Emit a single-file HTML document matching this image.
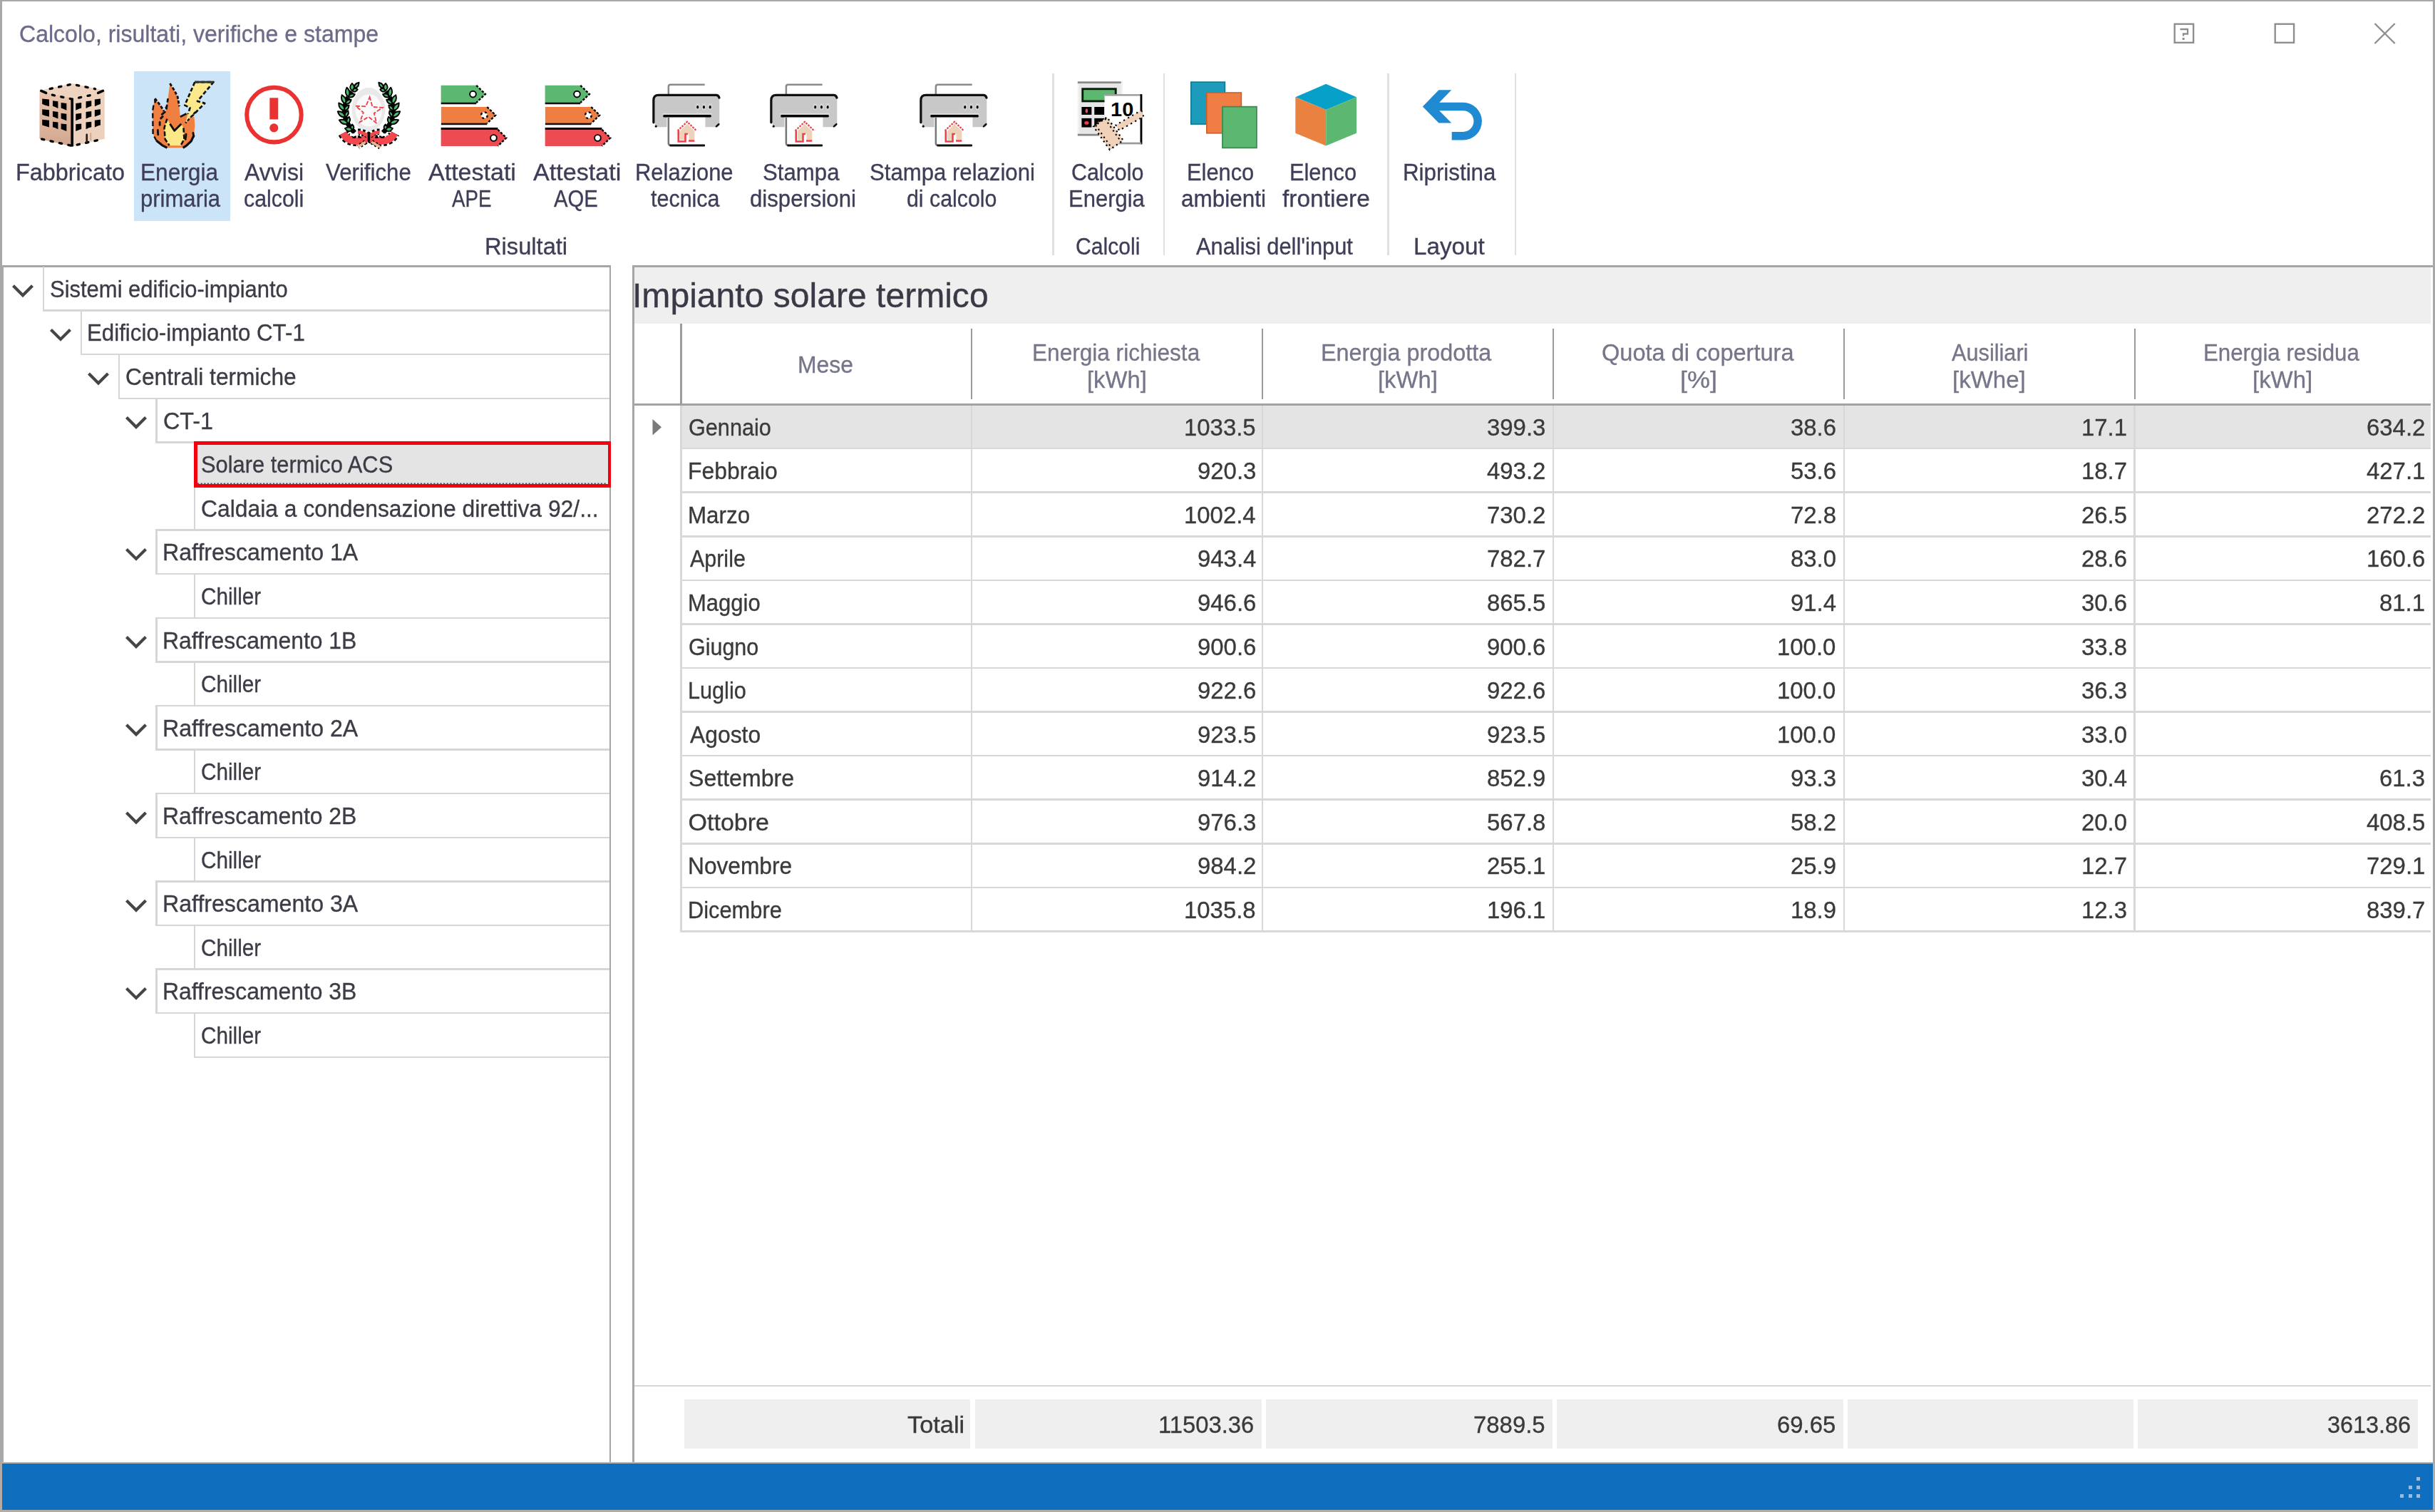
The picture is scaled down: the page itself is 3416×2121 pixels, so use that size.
<!DOCTYPE html><html><head><meta charset="utf-8"><title>Calcolo, risultati, verifiche e stampe</title><style>

html,body{margin:0;padding:0;background:#fff;}
body{width:3416px;height:2121px;position:relative;overflow:hidden;font-family:"Liberation Sans", sans-serif;}
#w{position:absolute;left:0;top:0;width:3416px;height:2121px;filter:blur(0.6px);}
i{position:absolute;display:block;}
.t{position:absolute;white-space:pre;-webkit-text-stroke:0.35px currentColor;font-size:34px;line-height:60px;transform-origin:0 50%;}
svg{position:absolute;overflow:visible;}

</style></head><body><div id="w">
<i style="left:188.0px;top:99.5px;width:134.7px;height:210.8px;background:#cce4f7"></i>
<i style="left:1476.4px;top:102.5px;width:2.6px;height:255.3px;background:#e0e0e0"></i>
<i style="left:1631.9px;top:102.5px;width:2.6px;height:255.3px;background:#e0e0e0"></i>
<i style="left:1946.2px;top:102.5px;width:2.6px;height:255.3px;background:#e0e0e0"></i>
<i style="left:2124.7px;top:102.5px;width:2.6px;height:255.3px;background:#e0e0e0"></i>
<i style="left:2.5px;top:371.6px;width:854.7px;height:3.2px;background:#a6a6a6"></i>
<i style="left:854.6px;top:371.6px;width:2.6px;height:1680.9px;background:#a6a6a6"></i>
<i style="left:-10.0px;top:371.6px;width:15.4px;height:1680.9px;background:#aaaaaa"></i>
<i style="left:886.8px;top:371.8px;width:2539.2px;height:3.2px;background:#a6a6a6"></i>
<i style="left:886.8px;top:371.8px;width:3.0px;height:1680.7px;background:#a6a6a6"></i>
<i style="left:59.5px;top:374.0px;width:2.6px;height:61.6px;background:#d6d6d6"></i>
<i style="left:59.5px;top:434.3px;width:795.1px;height:2.6px;background:#d6d6d6"></i>
<i style="left:112.5px;top:435.6px;width:2.6px;height:61.6px;background:#d6d6d6"></i>
<i style="left:112.5px;top:495.9px;width:742.1px;height:2.6px;background:#d6d6d6"></i>
<i style="left:165.5px;top:497.2px;width:2.6px;height:61.6px;background:#d6d6d6"></i>
<i style="left:165.5px;top:557.5px;width:689.1px;height:2.6px;background:#d6d6d6"></i>
<i style="left:218.3px;top:558.8px;width:2.6px;height:61.6px;background:#d6d6d6"></i>
<i style="left:218.3px;top:619.1px;width:636.3px;height:2.6px;background:#d6d6d6"></i>
<i style="left:271.5px;top:620.4px;width:2.6px;height:61.6px;background:#d6d6d6"></i>
<i style="left:271.5px;top:680.7px;width:583.1px;height:2.6px;background:#d6d6d6"></i>
<i style="left:271.5px;top:682.0px;width:2.6px;height:61.6px;background:#d6d6d6"></i>
<i style="left:218.3px;top:742.3px;width:636.3px;height:2.6px;background:#d6d6d6"></i>
<i style="left:218.3px;top:743.6px;width:2.6px;height:61.6px;background:#d6d6d6"></i>
<i style="left:218.3px;top:803.9px;width:636.3px;height:2.6px;background:#d6d6d6"></i>
<i style="left:271.5px;top:805.2px;width:2.6px;height:61.6px;background:#d6d6d6"></i>
<i style="left:218.3px;top:865.5px;width:636.3px;height:2.6px;background:#d6d6d6"></i>
<i style="left:218.3px;top:866.8px;width:2.6px;height:61.6px;background:#d6d6d6"></i>
<i style="left:218.3px;top:927.1px;width:636.3px;height:2.6px;background:#d6d6d6"></i>
<i style="left:271.5px;top:928.4px;width:2.6px;height:61.6px;background:#d6d6d6"></i>
<i style="left:218.3px;top:988.7px;width:636.3px;height:2.6px;background:#d6d6d6"></i>
<i style="left:218.3px;top:990.0px;width:2.6px;height:61.6px;background:#d6d6d6"></i>
<i style="left:218.3px;top:1050.3px;width:636.3px;height:2.6px;background:#d6d6d6"></i>
<i style="left:271.5px;top:1051.6px;width:2.6px;height:61.6px;background:#d6d6d6"></i>
<i style="left:218.3px;top:1111.9px;width:636.3px;height:2.6px;background:#d6d6d6"></i>
<i style="left:218.3px;top:1113.2px;width:2.6px;height:61.6px;background:#d6d6d6"></i>
<i style="left:218.3px;top:1173.5px;width:636.3px;height:2.6px;background:#d6d6d6"></i>
<i style="left:271.5px;top:1174.8px;width:2.6px;height:61.6px;background:#d6d6d6"></i>
<i style="left:218.3px;top:1235.1px;width:636.3px;height:2.6px;background:#d6d6d6"></i>
<i style="left:218.3px;top:1236.4px;width:2.6px;height:61.6px;background:#d6d6d6"></i>
<i style="left:218.3px;top:1296.7px;width:636.3px;height:2.6px;background:#d6d6d6"></i>
<i style="left:271.5px;top:1298.0px;width:2.6px;height:61.6px;background:#d6d6d6"></i>
<i style="left:218.3px;top:1358.3px;width:636.3px;height:2.6px;background:#d6d6d6"></i>
<i style="left:218.3px;top:1359.6px;width:2.6px;height:61.6px;background:#d6d6d6"></i>
<i style="left:218.3px;top:1419.9px;width:636.3px;height:2.6px;background:#d6d6d6"></i>
<i style="left:271.5px;top:1421.2px;width:2.6px;height:61.6px;background:#d6d6d6"></i>
<i style="left:271.5px;top:1481.5px;width:583.1px;height:2.6px;background:#d6d6d6"></i>
<i style="left:271.8px;top:619.4px;width:585.4px;height:64.4px;background:#f2000e"></i>
<i style="left:276.5px;top:624.1px;width:576.1px;height:55.0px;background:#e4e4e4"></i>
<i style="left:889.8px;top:375.0px;width:2520.7px;height:78.6px;background:#efefef"></i>
<i style="left:956.6px;top:569.2px;width:2453.9px;height:59.0px;background:#e4e4e4"></i>
<i style="left:954.3px;top:627.9px;width:2456.2px;height:2.6px;background:#d8d8d8"></i>
<i style="left:954.3px;top:689.4px;width:2456.2px;height:2.6px;background:#d8d8d8"></i>
<i style="left:954.3px;top:751.0px;width:2456.2px;height:2.6px;background:#d8d8d8"></i>
<i style="left:954.3px;top:812.6px;width:2456.2px;height:2.6px;background:#d8d8d8"></i>
<i style="left:954.3px;top:874.2px;width:2456.2px;height:2.6px;background:#d8d8d8"></i>
<i style="left:954.3px;top:935.7px;width:2456.2px;height:2.6px;background:#d8d8d8"></i>
<i style="left:954.3px;top:997.3px;width:2456.2px;height:2.6px;background:#d8d8d8"></i>
<i style="left:954.3px;top:1058.9px;width:2456.2px;height:2.6px;background:#d8d8d8"></i>
<i style="left:954.3px;top:1120.4px;width:2456.2px;height:2.6px;background:#d8d8d8"></i>
<i style="left:954.3px;top:1182.0px;width:2456.2px;height:2.6px;background:#d8d8d8"></i>
<i style="left:954.3px;top:1243.6px;width:2456.2px;height:2.6px;background:#d8d8d8"></i>
<i style="left:954.3px;top:1305.1px;width:2456.2px;height:2.6px;background:#d8d8d8"></i>
<i style="left:954.2px;top:567.6px;width:2.6px;height:740.1px;background:#d8d8d8"></i>
<i style="left:1361.9px;top:567.6px;width:2.6px;height:740.1px;background:#d8d8d8"></i>
<i style="left:1769.9px;top:567.6px;width:2.6px;height:740.1px;background:#d8d8d8"></i>
<i style="left:2177.8px;top:567.6px;width:2.6px;height:740.1px;background:#d8d8d8"></i>
<i style="left:2585.6px;top:567.6px;width:2.6px;height:740.1px;background:#d8d8d8"></i>
<i style="left:2993.4px;top:567.6px;width:2.6px;height:740.1px;background:#d8d8d8"></i>
<i style="left:889.8px;top:565.9px;width:2520.7px;height:3.3px;background:#a2a2a2"></i>
<i style="left:954.0px;top:453.6px;width:2.6px;height:113.4px;background:#9c9c9c"></i>
<i style="left:1362.0px;top:460.5px;width:2.4px;height:99.5px;background:#9a9a9a"></i>
<i style="left:1770.0px;top:460.5px;width:2.4px;height:99.5px;background:#9a9a9a"></i>
<i style="left:2177.9px;top:460.5px;width:2.4px;height:99.5px;background:#9a9a9a"></i>
<i style="left:2585.7px;top:460.5px;width:2.4px;height:99.5px;background:#9a9a9a"></i>
<i style="left:2993.5px;top:460.5px;width:2.4px;height:99.5px;background:#9a9a9a"></i>
<i style="left:889.8px;top:1942.5px;width:2520.7px;height:2.1px;background:#d6d6d6"></i>
<i style="left:960.4px;top:1962.8px;width:401.1px;height:69.6px;background:#efefef"></i>
<i style="left:1368.0px;top:1962.8px;width:401.5px;height:69.6px;background:#efefef"></i>
<i style="left:1776.0px;top:1962.8px;width:401.5px;height:69.6px;background:#efefef"></i>
<i style="left:2184.0px;top:1962.8px;width:401.5px;height:69.6px;background:#efefef"></i>
<i style="left:2592.0px;top:1962.8px;width:401.2px;height:69.6px;background:#efefef"></i>
<i style="left:2999.2px;top:1962.8px;width:392.8px;height:69.6px;background:#efefef"></i>
<i style="left:-10.0px;top:2050.8px;width:3436.0px;height:2.2px;background:#bcb4ac"></i>
<i style="left:3.0px;top:2052.8px;width:3410.0px;height:65.4px;background:#106ebe"></i>
<i style="left:3390.2px;top:2071.9px;width:5.0px;height:5.0px;background:#98bce2"></i>
<i style="left:3378.5px;top:2083.8px;width:5.0px;height:5.0px;background:#98bce2"></i>
<i style="left:3390.2px;top:2083.8px;width:5.0px;height:5.0px;background:#98bce2"></i>
<i style="left:3366.5px;top:2095.5px;width:5.0px;height:5.0px;background:#98bce2"></i>
<i style="left:3378.5px;top:2095.5px;width:5.0px;height:5.0px;background:#98bce2"></i>
<i style="left:3390.2px;top:2095.5px;width:5.0px;height:5.0px;background:#98bce2"></i>
<i style="left:-10.0px;top:-10.0px;width:3436.0px;height:12.4px;background:#a8a8a8"></i>
<i style="left:-10.0px;top:-10.0px;width:12.6px;height:2063.0px;background:#a8a8a8"></i>
<i style="left:3412.6px;top:-10.0px;width:13.4px;height:2063.0px;background:#a8a8a8"></i>
<i style="left:-10.0px;top:2053.0px;width:13.0px;height:78.0px;background:#b2aca6"></i>
<i style="left:3413.0px;top:2053.0px;width:13.0px;height:78.0px;background:#b2aca6"></i>
<i style="left:-10.0px;top:2118.2px;width:3436.0px;height:12.8px;background:#b2aca6"></i>
<svg style="left:0;top:0" width="3416" height="2121" viewBox="0 0 3416 2121"><path d="M18.5,400.8 L32.0,414.3 L45.5,400.8" fill="none" stroke="#454545" stroke-width="4.2"/><path d="M71.5,462.4 L85.0,475.9 L98.5,462.4" fill="none" stroke="#454545" stroke-width="4.2"/><path d="M124.5,524.0 L138.0,537.5 L151.5,524.0" fill="none" stroke="#454545" stroke-width="4.2"/><path d="M177.5,585.6 L191.0,599.1 L204.5,585.6" fill="none" stroke="#454545" stroke-width="4.2"/><path d="M177.5,770.4 L191.0,783.9 L204.5,770.4" fill="none" stroke="#454545" stroke-width="4.2"/><path d="M177.5,893.6 L191.0,907.1 L204.5,893.6" fill="none" stroke="#454545" stroke-width="4.2"/><path d="M177.5,1016.8 L191.0,1030.3 L204.5,1016.8" fill="none" stroke="#454545" stroke-width="4.2"/><path d="M177.5,1140.0 L191.0,1153.5 L204.5,1140.0" fill="none" stroke="#454545" stroke-width="4.2"/><path d="M177.5,1263.2 L191.0,1276.7 L204.5,1263.2" fill="none" stroke="#454545" stroke-width="4.2"/><path d="M177.5,1386.4 L191.0,1399.9 L204.5,1386.4" fill="none" stroke="#454545" stroke-width="4.2"/><path d="M915.5,588 L928,599.3 L915.5,610.5 Z" fill="#7a7a7a"/><rect x="3050.7" y="33.7" width="26.4" height="26.1" fill="none" stroke="#8e8e8e" stroke-width="2.4"/><path d="M3058.5,41 H3069 V47.5 H3063 V50.5" fill="none" stroke="#8e8e8e" stroke-width="2.3"/><rect x="3061.6" y="53" width="3" height="3" fill="#8e8e8e"/><rect x="3191.7" y="33.7" width="26.4" height="26.1" fill="none" stroke="#8e8e8e" stroke-width="2.4"/><path d="M3331.5,33 L3359.7,61 M3359.7,33 L3331.5,61" fill="none" stroke="#8e8e8e" stroke-width="2.4"/><path d="M277,678.4 H852" stroke="#555" stroke-width="1.6" stroke-dasharray="2.3 2.3"/></svg>
<svg style="left:40px;top:100px" width="140" height="120" viewBox="0 0 1764 1512"><defs><linearGradient id="bl" x1="0" y1="0" x2="0" y2="1"><stop offset="0" stop-color="#ecc8b0"/><stop offset="1" stop-color="#d2a68e"/></linearGradient></defs><polygon points="195,340 770,470 770,1330 195,1195" fill="url(#bl)"/><polygon points="770,470 1345,340 1345,1195 770,1330" fill="#ecd2be"/><polygon points="195,340 770,215 1345,340 770,470" fill="#eed4c0"/><g fill="none" stroke="#000" stroke-width="42" stroke-linecap="round" stroke-dasharray="42 118"><path d="M370,312 L770,228 L1180,312" stroke-dashoffset="-10"/><path d="M420,418 L770,492 L1120,418" stroke-dasharray="40 120"/><path d="M215,1195 L770,1318 L1325,1195" stroke-dashoffset="-20"/></g><path d="M225,345 L310,382 M1315,345 L1230,382" stroke="#000" stroke-width="46" stroke-linecap="round"/><rect x="748" y="480" width="46" height="850" fill="#000"/><g fill="#000"><polygon points="242,485 365,497 365,619 282,595 242,580" /><polygon points="428,520 522,532 522,654 468,630 428,615" /><polygon points="575,555 672,567 672,689 615,665 575,650" /><polygon points="835,567 935,555 935,650 890,665 835,689" /><polygon points="1015,532 1112,520 1112,615 1067,630 1015,654" /><polygon points="1170,497 1272,485 1272,580 1227,595 1170,619" /><polygon points="242,670 365,682 365,804 282,780 242,765" /><polygon points="428,705 522,717 522,839 468,815 428,800" /><polygon points="575,740 672,752 672,874 615,850 575,835" /><polygon points="835,752 935,740 935,835 890,850 835,874" /><polygon points="1015,717 1112,705 1112,800 1067,815 1015,839" /><polygon points="1170,682 1272,670 1272,765 1227,780 1170,804" /><polygon points="242,855 365,867 365,989 282,965 242,950" /><polygon points="428,890 522,902 522,1024 468,1000 428,985" /><polygon points="575,925 672,937 672,1059 615,1035 575,1020" /><polygon points="835,937 935,925 935,1020 890,1035 835,1059" /><polygon points="1015,902 1112,890 1112,985 1067,1000 1015,1024" /><polygon points="1170,867 1272,855 1272,950 1227,965 1170,989" /></g><path d="M1030,1120 V1250" stroke="#2a1a10" stroke-width="34" stroke-linecap="round"/><path d="M1100,1090 V1220" stroke="#c8a088" stroke-width="22"/></svg>
<svg style="left:190px;top:100px" width="140" height="120" viewBox="0 0 1764 1512"><polygon points="1050,190 1380,190 1095,530 1225,565 880,915 965,645 872,600" fill="#fce98c" stroke="#111" stroke-width="34" stroke-dasharray="70 38" stroke-linejoin="round"/><path d="M1050,190 H1380" stroke="#333" stroke-width="36"/><path d="M345,480 L430,590 L505,705 L540,690 L575,480 L610,215 L690,340 L745,450 L775,620 L792,805 L900,750 L1040,810 L1050,960 L1035,1130 L985,1235 L900,1315 L840,1352 L560,1352 L470,1305 L370,1225 L310,1110 L305,700 L320,590 Z" fill="#f07f42"/><path d="M345,480 L430,590 L505,705 M610,215 L690,340 L745,450 L775,620" fill="none" stroke="#111" stroke-width="36" stroke-dasharray="55 30" stroke-linejoin="round"/><path d="M320,600 L305,700 L310,1110 L370,1225" fill="none" stroke="#111" stroke-width="30" stroke-dasharray="90 50"/><path d="M370,1225 L470,1305 L560,1352 M840,1352 L900,1315 L985,1235 L1035,1130" fill="none" stroke="#111" stroke-width="40" stroke-linejoin="round"/><path d="M575,480 L545,680 M345,490 L350,560" fill="none" stroke="#111" stroke-width="34" stroke-dasharray="70 40"/><path d="M792,805 L900,750" fill="none" stroke="#111" stroke-width="34"/><polygon points="925,760 1060,700 885,915" fill="#fce98c"/><path d="M1060,720 L885,915" stroke="#111" stroke-width="30" stroke-dasharray="50 30"/><path d="M560,840 L610,930 L690,1050 L810,930 L850,1000 L862,1200 L800,1312 L600,1312 L525,1200 L510,1000 Z" fill="#fde888"/><path d="M610,930 L690,1050 L810,930" fill="none" stroke="#111" stroke-width="36" stroke-linejoin="round"/><path d="M560,840 L510,1000 L525,1200 L600,1312 M850,1000 L862,1200 L800,1312" fill="none" stroke="#111" stroke-width="32" stroke-dasharray="80 36"/><path d="M470,760 L520,720 M450,830 L480,800 M430,900 L430,950 M395,1040 L400,1120 M895,1110 L885,1200 M1020,1090 L1030,1150 M540,640 L548,660" stroke="#111" stroke-width="36" stroke-linecap="round"/></svg>
<svg style="left:320px;top:100px" width="140" height="120" viewBox="0 0 1764 1512"><circle cx="812" cy="770" r="482" fill="none" stroke="#ea3232" stroke-width="76"/><rect x="735" y="470" width="150" height="380" fill="#ea3232"/><circle cx="810" cy="1000" r="76" fill="#ea3232"/></svg>
<svg style="left:450px;top:100px" width="140" height="120" viewBox="0 0 1764 1512"><ellipse cx="845" cy="675" rx="295" ry="385" fill="#e9e9e9"/><ellipse cx="848" cy="690" rx="235" ry="285" fill="#fafafa"/><polygon points="865,455 914,628 1092,642 943,742 985,916 844,805 691,898 753,730 617,614 796,621" fill="none" stroke="#ee4450" stroke-width="24" stroke-dasharray="55 48" stroke-linecap="round"/><g><path d="M600,1085 Q210,690 650,235" fill="none" stroke="#000" stroke-width="84" stroke-dasharray="90 30"/><path transform="translate(556 1037) rotate(-90)" d="M0,0 Q44,-58 97.5,0 Q44,58 0,0 Z" fill="#4fba6c" stroke="#000" stroke-width="24" stroke-linejoin="round"/><path transform="translate(556 1037) rotate(-168)" d="M0,0 Q58,-72 130,0 Q58,72 0,0 Z" fill="#4fba6c" stroke="#000" stroke-width="24" stroke-linejoin="round"/><path transform="translate(477 925) rotate(-79)" d="M0,0 Q56,-58 123.75,0 Q56,58 0,0 Z" fill="#4fba6c" stroke="#000" stroke-width="24" stroke-linejoin="round"/><path transform="translate(477 925) rotate(-157)" d="M0,0 Q74,-72 165,0 Q74,72 0,0 Z" fill="#4fba6c" stroke="#000" stroke-width="24" stroke-linejoin="round"/><path transform="translate(431 809) rotate(-65)" d="M0,0 Q56,-58 123.75,0 Q56,58 0,0 Z" fill="#4fba6c" stroke="#000" stroke-width="24" stroke-linejoin="round"/><path transform="translate(431 809) rotate(-143)" d="M0,0 Q74,-72 165,0 Q74,72 0,0 Z" fill="#4fba6c" stroke="#000" stroke-width="24" stroke-linejoin="round"/><path transform="translate(417 692) rotate(-49)" d="M0,0 Q56,-58 123.75,0 Q56,58 0,0 Z" fill="#4fba6c" stroke="#000" stroke-width="24" stroke-linejoin="round"/><path transform="translate(417 692) rotate(-127)" d="M0,0 Q74,-72 165,0 Q74,72 0,0 Z" fill="#4fba6c" stroke="#000" stroke-width="24" stroke-linejoin="round"/><path transform="translate(435 572) rotate(-34)" d="M0,0 Q56,-58 123.75,0 Q56,58 0,0 Z" fill="#4fba6c" stroke="#000" stroke-width="24" stroke-linejoin="round"/><path transform="translate(435 572) rotate(-112)" d="M0,0 Q74,-72 165,0 Q74,72 0,0 Z" fill="#4fba6c" stroke="#000" stroke-width="24" stroke-linejoin="round"/><path transform="translate(487 450) rotate(-21)" d="M0,0 Q56,-58 123.75,0 Q56,58 0,0 Z" fill="#4fba6c" stroke="#000" stroke-width="24" stroke-linejoin="round"/><path transform="translate(487 450) rotate(-99)" d="M0,0 Q74,-72 165,0 Q74,72 0,0 Z" fill="#4fba6c" stroke="#000" stroke-width="24" stroke-linejoin="round"/><path transform="translate(556 343) rotate(-13)" d="M0,0 Q44,-58 97.5,0 Q44,58 0,0 Z" fill="#4fba6c" stroke="#000" stroke-width="24" stroke-linejoin="round"/><path transform="translate(556 343) rotate(-91)" d="M0,0 Q58,-72 130,0 Q58,72 0,0 Z" fill="#4fba6c" stroke="#000" stroke-width="24" stroke-linejoin="round"/><path transform="translate(592 298) rotate(-50)" d="M0,0 Q58,-56 130,0 Q58,56 0,0 Z" fill="#4fba6c" stroke="#000" stroke-width="24" stroke-linejoin="round"/></g><g transform="translate(1700 0) scale(-1 1)"><path d="M600,1085 Q210,690 650,235" fill="none" stroke="#000" stroke-width="84" stroke-dasharray="90 30"/><path transform="translate(556 1037) rotate(-90)" d="M0,0 Q44,-58 97.5,0 Q44,58 0,0 Z" fill="#4fba6c" stroke="#000" stroke-width="24" stroke-linejoin="round"/><path transform="translate(556 1037) rotate(-168)" d="M0,0 Q58,-72 130,0 Q58,72 0,0 Z" fill="#4fba6c" stroke="#000" stroke-width="24" stroke-linejoin="round"/><path transform="translate(477 925) rotate(-79)" d="M0,0 Q56,-58 123.75,0 Q56,58 0,0 Z" fill="#4fba6c" stroke="#000" stroke-width="24" stroke-linejoin="round"/><path transform="translate(477 925) rotate(-157)" d="M0,0 Q74,-72 165,0 Q74,72 0,0 Z" fill="#4fba6c" stroke="#000" stroke-width="24" stroke-linejoin="round"/><path transform="translate(431 809) rotate(-65)" d="M0,0 Q56,-58 123.75,0 Q56,58 0,0 Z" fill="#4fba6c" stroke="#000" stroke-width="24" stroke-linejoin="round"/><path transform="translate(431 809) rotate(-143)" d="M0,0 Q74,-72 165,0 Q74,72 0,0 Z" fill="#4fba6c" stroke="#000" stroke-width="24" stroke-linejoin="round"/><path transform="translate(417 692) rotate(-49)" d="M0,0 Q56,-58 123.75,0 Q56,58 0,0 Z" fill="#4fba6c" stroke="#000" stroke-width="24" stroke-linejoin="round"/><path transform="translate(417 692) rotate(-127)" d="M0,0 Q74,-72 165,0 Q74,72 0,0 Z" fill="#4fba6c" stroke="#000" stroke-width="24" stroke-linejoin="round"/><path transform="translate(435 572) rotate(-34)" d="M0,0 Q56,-58 123.75,0 Q56,58 0,0 Z" fill="#4fba6c" stroke="#000" stroke-width="24" stroke-linejoin="round"/><path transform="translate(435 572) rotate(-112)" d="M0,0 Q74,-72 165,0 Q74,72 0,0 Z" fill="#4fba6c" stroke="#000" stroke-width="24" stroke-linejoin="round"/><path transform="translate(487 450) rotate(-21)" d="M0,0 Q56,-58 123.75,0 Q56,58 0,0 Z" fill="#4fba6c" stroke="#000" stroke-width="24" stroke-linejoin="round"/><path transform="translate(487 450) rotate(-99)" d="M0,0 Q74,-72 165,0 Q74,72 0,0 Z" fill="#4fba6c" stroke="#000" stroke-width="24" stroke-linejoin="round"/><path transform="translate(556 343) rotate(-13)" d="M0,0 Q44,-58 97.5,0 Q44,58 0,0 Z" fill="#4fba6c" stroke="#000" stroke-width="24" stroke-linejoin="round"/><path transform="translate(556 343) rotate(-91)" d="M0,0 Q58,-72 130,0 Q58,72 0,0 Z" fill="#4fba6c" stroke="#000" stroke-width="24" stroke-linejoin="round"/><path transform="translate(592 298) rotate(-50)" d="M0,0 Q58,-56 130,0 Q58,56 0,0 Z" fill="#4fba6c" stroke="#000" stroke-width="24" stroke-linejoin="round"/></g><path d="M395,1095 Q470,1240 650,1232 Q790,1215 850,1150 Q910,1215 1050,1232 Q1230,1240 1305,1095" fill="none" stroke="#000" stroke-width="185" stroke-dasharray="46 34"/><path d="M395,1095 Q470,1240 650,1232 Q790,1215 850,1150 Q910,1215 1050,1232 Q1230,1240 1305,1095" fill="none" stroke="#f4484e" stroke-width="125"/><path d="M660,1070 Q760,1060 850,1150 Q940,1060 1040,1070" fill="none" stroke="#000" stroke-width="110" stroke-dasharray="40 36"/><path d="M660,1080 Q760,1070 850,1160 Q940,1070 1040,1080" fill="none" stroke="#f4484e" stroke-width="62"/><ellipse cx="565" cy="1122" rx="55" ry="24" fill="#fff"/><ellipse cx="1135" cy="1122" rx="55" ry="24" fill="#fff"/><path d="M850,1110 V1235" stroke="#000" stroke-width="44"/><path d="M560,1168 H740 M960,1168 H1140" stroke="#000" stroke-width="32" stroke-dasharray="56 44"/><path d="M790,1250 L660,1335 M900,1250 L1050,1340" stroke="#000" stroke-width="84" stroke-dasharray="34 40"/><path d="M790,1250 L660,1335 M900,1250 L1050,1340" stroke="#e8b896" stroke-width="44"/></svg>
<svg style="left:600px;top:100px" width="140" height="120" viewBox="0 0 1764 1512"><polygon points="235,250 860,250 1020,402.5 860,555 235,555" fill="#5cb871"/><path d="M860,250 L1020,402.5 L860,555" fill="none" stroke="#000" stroke-width="30" stroke-dasharray="42 26"/><rect x="235" y="551" width="625" height="32" fill="#111"/><circle cx="800" cy="404.5" r="55" fill="#fff" stroke="#000" stroke-width="24" /><polygon points="238,630 1050,630 1200,775.0 1050,920 238,920" fill="#ef7e42"/><path d="M1050,630 L1200,775.0 L1050,920" fill="none" stroke="#000" stroke-width="30" stroke-dasharray="42 26"/><rect x="238" y="916" width="812" height="32" fill="#111"/><circle cx="1000" cy="777.0" r="55" fill="#fff" stroke="#000" stroke-width="30" stroke-dasharray='40 46'/><polygon points="235,1030 1240,1030 1390,1176.0 1240,1322 235,1322" fill="#eb4b51"/><path d="M1240,1030 L1390,1176.0 L1240,1322" fill="none" stroke="#000" stroke-width="30" stroke-dasharray="42 26"/><rect x="235" y="995" width="1005" height="38" fill="#000"/><circle cx="1165" cy="1178.0" r="55" fill="#fff" stroke="#000" stroke-width="24" /></svg>
<svg style="left:746.3px;top:100px" width="140" height="120" viewBox="0 0 1764 1512"><polygon points="235,250 860,250 1020,402.5 860,555 235,555" fill="#5cb871"/><path d="M860,250 L1020,402.5 L860,555" fill="none" stroke="#000" stroke-width="30" stroke-dasharray="42 26"/><rect x="235" y="551" width="625" height="32" fill="#111"/><circle cx="800" cy="404.5" r="55" fill="#fff" stroke="#000" stroke-width="24" /><polygon points="238,630 1050,630 1200,775.0 1050,920 238,920" fill="#ef7e42"/><path d="M1050,630 L1200,775.0 L1050,920" fill="none" stroke="#000" stroke-width="30" stroke-dasharray="42 26"/><rect x="238" y="916" width="812" height="32" fill="#111"/><circle cx="1000" cy="777.0" r="55" fill="#fff" stroke="#000" stroke-width="30" stroke-dasharray='40 46'/><polygon points="235,1030 1240,1030 1390,1176.0 1240,1322 235,1322" fill="#eb4b51"/><path d="M1240,1030 L1390,1176.0 L1240,1322" fill="none" stroke="#000" stroke-width="30" stroke-dasharray="42 26"/><rect x="235" y="995" width="1005" height="38" fill="#000"/><circle cx="1165" cy="1178.0" r="55" fill="#fff" stroke="#000" stroke-width="24" /></svg>
<svg style="left:895px;top:100px" width="140" height="120" viewBox="0 0 1764 1512"><path d="M540,410 V270 Q540,235 575,235 H1180" fill="none" stroke="#8a8a8a" stroke-width="32"/><path d="M300,500 Q300,440 360,440 H1380 Q1440,440 1440,500 V930 Q1440,985 1385,985 H1190 V800 H510 V985 H355 Q300,985 300,930 Z" fill="#c8c8c8"/><path d="M276,905 V510 Q276,420 366,420 H1385 Q1425,425 1436,468" fill="none" stroke="#111" stroke-width="42" stroke-linecap="round"/><circle cx="318" cy="972" r="20" fill="#111"/><path d="M1385,975 L1428,935" stroke="#111" stroke-width="32" stroke-linecap="round"/><rect x="445" y="770" width="850" height="42" rx="16" fill="#000"/><rect x="430" y="742" width="880" height="22" fill="#dcdcdc"/><ellipse cx="1055" cy="628" rx="40" ry="62" fill="#d4d4d4"/><ellipse cx="1055" cy="632" rx="19" ry="28" fill="#000"/><ellipse cx="1165" cy="628" rx="40" ry="62" fill="#d4d4d4"/><ellipse cx="1165" cy="632" rx="19" ry="28" fill="#000"/><ellipse cx="1275" cy="628" rx="40" ry="62" fill="#d4d4d4"/><ellipse cx="1275" cy="632" rx="19" ry="28" fill="#000"/><path d="M540,812 V1270 Q540,1310 580,1310" fill="none" stroke="#777" stroke-width="32"/><rect x="560" y="1290" width="625" height="40" rx="14" fill="#111"/><polygon points="740,1060 870,930 1000,1060 1000,1210 900,1210 900,1110 840,1110 840,1215 740,1215" fill="#ecd2ba"/><path d="M700,1052 L870,892 L1035,1052" fill="none" stroke="#ee4048" stroke-width="28" stroke-dasharray="34 18"/><path d="M715,1050 V1240 H838 V1110 H880" fill="none" stroke="#ee4048" stroke-width="32"/><rect x="895" y="1213" width="105" height="32" fill="#ee4048"/></svg>
<svg style="left:1059.6px;top:100px" width="140" height="120" viewBox="0 0 1764 1512"><path d="M540,410 V270 Q540,235 575,235 H1180" fill="none" stroke="#8a8a8a" stroke-width="32"/><path d="M300,500 Q300,440 360,440 H1380 Q1440,440 1440,500 V930 Q1440,985 1385,985 H1190 V800 H510 V985 H355 Q300,985 300,930 Z" fill="#c8c8c8"/><path d="M276,905 V510 Q276,420 366,420 H1385 Q1425,425 1436,468" fill="none" stroke="#111" stroke-width="42" stroke-linecap="round"/><circle cx="318" cy="972" r="20" fill="#111"/><path d="M1385,975 L1428,935" stroke="#111" stroke-width="32" stroke-linecap="round"/><rect x="445" y="770" width="850" height="42" rx="16" fill="#000"/><rect x="430" y="742" width="880" height="22" fill="#dcdcdc"/><ellipse cx="1055" cy="628" rx="40" ry="62" fill="#d4d4d4"/><ellipse cx="1055" cy="632" rx="19" ry="28" fill="#000"/><ellipse cx="1165" cy="628" rx="40" ry="62" fill="#d4d4d4"/><ellipse cx="1165" cy="632" rx="19" ry="28" fill="#000"/><ellipse cx="1275" cy="628" rx="40" ry="62" fill="#d4d4d4"/><ellipse cx="1275" cy="632" rx="19" ry="28" fill="#000"/><path d="M540,812 V1270 Q540,1310 580,1310" fill="none" stroke="#777" stroke-width="32"/><rect x="560" y="1290" width="625" height="40" rx="14" fill="#111"/><polygon points="740,1060 870,930 1000,1060 1000,1210 900,1210 900,1110 840,1110 840,1215 740,1215" fill="#ecd2ba"/><path d="M700,1052 L870,892 L1035,1052" fill="none" stroke="#ee4048" stroke-width="28" stroke-dasharray="34 18"/><path d="M715,1050 V1240 H838 V1110 H880" fill="none" stroke="#ee4048" stroke-width="32"/><rect x="895" y="1213" width="105" height="32" fill="#ee4048"/></svg>
<svg style="left:1270.4px;top:100px" width="140" height="120" viewBox="0 0 1764 1512"><path d="M540,410 V270 Q540,235 575,235 H1180" fill="none" stroke="#8a8a8a" stroke-width="32"/><path d="M300,500 Q300,440 360,440 H1380 Q1440,440 1440,500 V930 Q1440,985 1385,985 H1190 V800 H510 V985 H355 Q300,985 300,930 Z" fill="#c8c8c8"/><path d="M276,905 V510 Q276,420 366,420 H1385 Q1425,425 1436,468" fill="none" stroke="#111" stroke-width="42" stroke-linecap="round"/><circle cx="318" cy="972" r="20" fill="#111"/><path d="M1385,975 L1428,935" stroke="#111" stroke-width="32" stroke-linecap="round"/><rect x="445" y="770" width="850" height="42" rx="16" fill="#000"/><rect x="430" y="742" width="880" height="22" fill="#dcdcdc"/><ellipse cx="1055" cy="628" rx="40" ry="62" fill="#d4d4d4"/><ellipse cx="1055" cy="632" rx="19" ry="28" fill="#000"/><ellipse cx="1165" cy="628" rx="40" ry="62" fill="#d4d4d4"/><ellipse cx="1165" cy="632" rx="19" ry="28" fill="#000"/><ellipse cx="1275" cy="628" rx="40" ry="62" fill="#d4d4d4"/><ellipse cx="1275" cy="632" rx="19" ry="28" fill="#000"/><path d="M540,812 V1270 Q540,1310 580,1310" fill="none" stroke="#777" stroke-width="32"/><rect x="560" y="1290" width="625" height="40" rx="14" fill="#111"/><polygon points="740,1060 870,930 1000,1060 1000,1210 900,1210 900,1110 840,1110 840,1215 740,1215" fill="#ecd2ba"/><path d="M700,1052 L870,892 L1035,1052" fill="none" stroke="#ee4048" stroke-width="28" stroke-dasharray="34 18"/><path d="M715,1050 V1240 H838 V1110 H880" fill="none" stroke="#ee4048" stroke-width="32"/><rect x="895" y="1213" width="105" height="32" fill="#ee4048"/></svg>
<svg style="left:1490px;top:100px" width="140" height="120" viewBox="0 0 1764 1512"><rect x="275" y="180" width="795" height="960" fill="#e6e6e6"/><rect x="290" y="215" width="765" height="890" fill="none" stroke="#f2f2f2" stroke-width="30"/><rect x="275" y="180" width="765" height="36" fill="#8a8a8a"/><rect x="275" y="1105" width="380" height="36" fill="#8a8a8a"/><rect x="362" y="312" width="586" height="216" fill="#5cb871" stroke="#0a1a0a" stroke-width="36"/><rect x="345" y="630" width="176" height="138" fill="#000"/><rect x="570" y="630" width="176" height="138" fill="#000"/><rect x="345" y="830" width="176" height="160" fill="#000"/><rect x="570" y="830" width="176" height="160" fill="#000"/><ellipse cx="433" cy="700" rx="22" ry="38" fill="#f05058"/><ellipse cx="433" cy="912" rx="40" ry="30" fill="#e8404a"/><ellipse cx="650" cy="925" rx="28" ry="36" fill="#f05058"/><rect x="750" y="410" width="665" height="880" fill="#fff"/><rect x="750" y="405" width="640" height="30" fill="#9a9a9a"/><rect x="1380" y="405" width="36" height="885" fill="#000"/><rect x="960" y="1256" width="440" height="34" fill="#9a9a9a"/><text x="858" y="800" font-family="Liberation Sans, sans-serif" font-weight="bold" font-size="350" fill="#000" textLength="405" lengthAdjust="spacingAndGlyphs">10</text><polygon points="1400,690 1440,800 1010,1045 950,950" fill="#f0d2ba" stroke="#000" stroke-width="26" stroke-dasharray="28 60"/><g transform="rotate(-35 815 1095)"><rect x="670" y="850" width="290" height="500" fill="#f0d2ba" stroke="#000" stroke-width="28" stroke-dasharray="28 55"/><path d="M715,850 V1350 M915,850 V1350" stroke="#000" stroke-width="26" stroke-dasharray="28 55"/></g></svg>
<svg style="left:0;top:0" width="3416" height="400" viewBox="0 0 3416 400"><rect x="1670.8" y="115.1" width="47.6" height="59" fill="#1c9cba" stroke="#0f7890" stroke-width="1.6"/><rect x="1692.8" y="130" width="48.6" height="56.8" fill="#f07d43" stroke="#c8602c" stroke-width="1.6"/><rect x="1715" y="149.7" width="47.9" height="57.7" fill="#5cb871" stroke="#3a8c52" stroke-width="1.8"/></svg>
<svg style="left:0;top:0" width="3416" height="400" viewBox="0 0 3416 400"><polygon points="1860.2,117.8 1903,136.2 1860.2,154 1817.3,136.2" fill="#06a0c8"/><polygon points="1817.3,136.2 1860.2,154 1860.2,204.6 1817.3,186.8" fill="#e98140"/><polygon points="1903,136.2 1860.2,154 1860.2,204.6 1903,186.8" fill="#5cb871"/></svg>
<svg style="left:1970px;top:100px" width="140" height="120" viewBox="0 0 1764 1512"><path d="M325,625 L610,330 L835,330 L620,550 L1040,550 A332.5,332.5 0 0 1 1040,1215 L840,1215 L840,1070 L1040,1070 A187.5,187.5 0 0 0 1040,695 L620,695 L835,915 L610,915 Z" fill="#1f8ad2"/></svg>
<span class="t" style="left:26.6px;top:16.5px;color:#6c6c8a;transform:scaleX(0.9426)">Calcolo, risultati, verifiche e stampe</span>
<span class="t" style="left:22.1px;top:210.8px;color:#3e3e58;transform:scaleX(0.9519)">Fabbricato</span>
<span class="t" style="left:197.0px;top:210.8px;color:#3e3e58;transform:scaleX(0.9307)">Energia</span>
<span class="t" style="left:196.7px;top:248.3px;color:#3e3e58;transform:scaleX(0.9132)">primaria</span>
<span class="t" style="left:342.7px;top:210.8px;color:#3e3e58;transform:scaleX(0.9430)">Avvisi</span>
<span class="t" style="left:341.8px;top:248.3px;color:#3e3e58;transform:scaleX(0.8912)">calcoli</span>
<span class="t" style="left:456.6px;top:210.8px;color:#3e3e58;transform:scaleX(0.9194)">Verifiche</span>
<span class="t" style="left:601.4px;top:210.8px;color:#3e3e58;transform:scaleX(1.0008)">Attestati</span>
<span class="t" style="left:633.6px;top:248.3px;color:#3e3e58;transform:scaleX(0.8149)">APE</span>
<span class="t" style="left:747.8px;top:210.8px;color:#3e3e58;transform:scaleX(1.0033)">Attestati</span>
<span class="t" style="left:777.0px;top:248.3px;color:#3e3e58;transform:scaleX(0.8614)">AQE</span>
<span class="t" style="left:891.3px;top:210.8px;color:#3e3e58;transform:scaleX(0.9095)">Relazione</span>
<span class="t" style="left:913.2px;top:248.3px;color:#3e3e58;transform:scaleX(0.8963)">tecnica</span>
<span class="t" style="left:1070.2px;top:210.8px;color:#3e3e58;transform:scaleX(0.9174)">Stampa</span>
<span class="t" style="left:1051.8px;top:248.3px;color:#3e3e58;transform:scaleX(0.9164)">dispersioni</span>
<span class="t" style="left:1220.2px;top:210.8px;color:#3e3e58;transform:scaleX(0.9157)">Stampa relazioni</span>
<span class="t" style="left:1271.8px;top:248.3px;color:#3e3e58;transform:scaleX(0.8914)">di calcolo</span>
<span class="t" style="left:1502.5px;top:210.8px;color:#3e3e58;transform:scaleX(0.8936)">Calcolo</span>
<span class="t" style="left:1499.1px;top:248.3px;color:#3e3e58;transform:scaleX(0.9114)">Energia</span>
<span class="t" style="left:1665.3px;top:210.8px;color:#3e3e58;transform:scaleX(0.9060)">Elenco</span>
<span class="t" style="left:1656.9px;top:248.3px;color:#3e3e58;transform:scaleX(0.9264)">ambienti</span>
<span class="t" style="left:1809.0px;top:210.8px;color:#3e3e58;transform:scaleX(0.9050)">Elenco</span>
<span class="t" style="left:1799.2px;top:248.3px;color:#3e3e58;transform:scaleX(0.9846)">frontiere</span>
<span class="t" style="left:1968.1px;top:210.8px;color:#3e3e58;transform:scaleX(0.9201)">Ripristina</span>
<span class="t" style="left:679.7px;top:315.0px;color:#3e3e58;transform:scaleX(0.9603)">Risultati</span>
<span class="t" style="left:1508.7px;top:315.0px;color:#3e3e58;transform:scaleX(0.8857)">Calcoli</span>
<span class="t" style="left:1678.4px;top:315.0px;color:#3e3e58;transform:scaleX(0.9058)">Analisi dell&#x27;input</span>
<span class="t" style="left:1982.6px;top:315.0px;color:#3e3e58;transform:scaleX(0.9778)">Layout</span>
<span class="t" style="left:70.3px;top:374.8px;color:#3c3c46;transform:scaleX(0.9107)">Sistemi edificio-impianto</span>
<span class="t" style="left:122.3px;top:436.4px;color:#3c3c46;transform:scaleX(0.9195)">Edificio-impianto CT-1</span>
<span class="t" style="left:176.2px;top:498.0px;color:#3c3c46;transform:scaleX(0.9327)">Centrali termiche</span>
<span class="t" style="left:229.0px;top:559.6px;color:#3c3c46;transform:scaleX(0.9514)">CT-1</span>
<span class="t" style="left:282.3px;top:621.2px;color:#3c3c46;transform:scaleX(0.9075)">Solare termico ACS</span>
<span class="t" style="left:282.2px;top:682.8px;color:#3c3c46;transform:scaleX(0.9367)">Caldaia a condensazione direttiva 92/...</span>
<span class="t" style="left:228.1px;top:744.4px;color:#3c3c46;transform:scaleX(0.9443)">Raffrescamento 1A</span>
<span class="t" style="left:282.4px;top:806.0px;color:#3c3c46;transform:scaleX(0.8745)">Chiller</span>
<span class="t" style="left:228.1px;top:867.6px;color:#3c3c46;transform:scaleX(0.9378)">Raffrescamento 1B</span>
<span class="t" style="left:282.4px;top:929.2px;color:#3c3c46;transform:scaleX(0.8745)">Chiller</span>
<span class="t" style="left:228.1px;top:990.8px;color:#3c3c46;transform:scaleX(0.9443)">Raffrescamento 2A</span>
<span class="t" style="left:282.4px;top:1052.4px;color:#3c3c46;transform:scaleX(0.8745)">Chiller</span>
<span class="t" style="left:228.1px;top:1114.0px;color:#3c3c46;transform:scaleX(0.9378)">Raffrescamento 2B</span>
<span class="t" style="left:282.4px;top:1175.6px;color:#3c3c46;transform:scaleX(0.8745)">Chiller</span>
<span class="t" style="left:228.1px;top:1237.2px;color:#3c3c46;transform:scaleX(0.9443)">Raffrescamento 3A</span>
<span class="t" style="left:282.4px;top:1298.8px;color:#3c3c46;transform:scaleX(0.8745)">Chiller</span>
<span class="t" style="left:228.1px;top:1360.4px;color:#3c3c46;transform:scaleX(0.9378)">Raffrescamento 3B</span>
<span class="t" style="left:282.4px;top:1422.0px;color:#3c3c46;transform:scaleX(0.8745)">Chiller</span>
<span class="t" style="left:886.6px;top:384.3px;color:#3a3a46;font-size:49px;transform:scaleX(0.9811)">Impianto solare termico</span>
<span class="t" style="left:1118.8px;top:480.8px;color:#76768a;transform:scaleX(0.9367)">Mese</span>
<span class="t" style="left:1447.8px;top:464.2px;color:#76768a;transform:scaleX(0.9288)">Energia richiesta</span>
<span class="t" style="left:1524.8px;top:501.6px;color:#76768a;transform:scaleX(0.9639)">[kWh]</span>
<span class="t" style="left:1853.3px;top:464.2px;color:#76768a;transform:scaleX(0.9518)">Energia prodotta</span>
<span class="t" style="left:1932.7px;top:501.6px;color:#76768a;transform:scaleX(0.9639)">[kWh]</span>
<span class="t" style="left:2246.6px;top:464.2px;color:#76768a;transform:scaleX(0.9571)">Quota di copertura</span>
<span class="t" style="left:2356.5px;top:501.6px;color:#76768a;transform:scaleX(1.0600)">[%]</span>
<span class="t" style="left:2737.5px;top:464.2px;color:#76768a;transform:scaleX(0.9026)">Ausiliari</span>
<span class="t" style="left:2739.4px;top:501.6px;color:#76768a;transform:scaleX(0.9703)">[kWhe]</span>
<span class="t" style="left:3091.1px;top:464.2px;color:#76768a;transform:scaleX(0.9191)">Energia residua</span>
<span class="t" style="left:3159.8px;top:501.6px;color:#76768a;transform:scaleX(0.9675)">[kWh]</span>
<span class="t" style="left:965.8px;top:568.6px;color:#3a3a3a;transform:scaleX(0.9008)">Gennaio</span>
<span class="t" style="left:1661.2px;top:568.6px;color:#3a3a3a;transform:scaleX(0.9674)">1033.5</span>
<span class="t" style="left:2086.3px;top:568.6px;color:#3a3a3a;transform:scaleX(0.9674)">399.3</span>
<span class="t" style="left:2511.7px;top:568.6px;color:#3a3a3a;transform:scaleX(0.9674)">38.6</span>
<span class="t" style="left:2920.4px;top:568.6px;color:#3a3a3a;transform:scaleX(0.9674)">17.1</span>
<span class="t" style="left:3319.7px;top:568.6px;color:#3a3a3a;transform:scaleX(0.9674)">634.2</span>
<span class="t" style="left:964.8px;top:630.2px;color:#3a3a3a;transform:scaleX(0.9377)">Febbraio</span>
<span class="t" style="left:1679.5px;top:630.2px;color:#3a3a3a;transform:scaleX(0.9674)">920.3</span>
<span class="t" style="left:2086.3px;top:630.2px;color:#3a3a3a;transform:scaleX(0.9674)">493.2</span>
<span class="t" style="left:2511.7px;top:630.2px;color:#3a3a3a;transform:scaleX(0.9674)">53.6</span>
<span class="t" style="left:2920.4px;top:630.2px;color:#3a3a3a;transform:scaleX(0.9674)">18.7</span>
<span class="t" style="left:3319.7px;top:630.2px;color:#3a3a3a;transform:scaleX(0.9674)">427.1</span>
<span class="t" style="left:964.8px;top:691.7px;color:#3a3a3a;transform:scaleX(0.9222)">Marzo</span>
<span class="t" style="left:1661.2px;top:691.7px;color:#3a3a3a;transform:scaleX(0.9674)">1002.4</span>
<span class="t" style="left:2086.3px;top:691.7px;color:#3a3a3a;transform:scaleX(0.9674)">730.2</span>
<span class="t" style="left:2511.7px;top:691.7px;color:#3a3a3a;transform:scaleX(0.9674)">72.8</span>
<span class="t" style="left:2920.4px;top:691.7px;color:#3a3a3a;transform:scaleX(0.9674)">26.5</span>
<span class="t" style="left:3319.7px;top:691.7px;color:#3a3a3a;transform:scaleX(0.9674)">272.2</span>
<span class="t" style="left:967.6px;top:753.3px;color:#3a3a3a;transform:scaleX(0.8953)">Aprile</span>
<span class="t" style="left:1679.5px;top:753.3px;color:#3a3a3a;transform:scaleX(0.9674)">943.4</span>
<span class="t" style="left:2086.3px;top:753.3px;color:#3a3a3a;transform:scaleX(0.9674)">782.7</span>
<span class="t" style="left:2511.7px;top:753.3px;color:#3a3a3a;transform:scaleX(0.9674)">83.0</span>
<span class="t" style="left:2920.4px;top:753.3px;color:#3a3a3a;transform:scaleX(0.9674)">28.6</span>
<span class="t" style="left:3319.7px;top:753.3px;color:#3a3a3a;transform:scaleX(0.9674)">160.6</span>
<span class="t" style="left:964.9px;top:814.9px;color:#3a3a3a;transform:scaleX(0.9112)">Maggio</span>
<span class="t" style="left:1679.5px;top:814.9px;color:#3a3a3a;transform:scaleX(0.9674)">946.6</span>
<span class="t" style="left:2086.3px;top:814.9px;color:#3a3a3a;transform:scaleX(0.9674)">865.5</span>
<span class="t" style="left:2511.7px;top:814.9px;color:#3a3a3a;transform:scaleX(0.9674)">91.4</span>
<span class="t" style="left:2920.4px;top:814.9px;color:#3a3a3a;transform:scaleX(0.9674)">30.6</span>
<span class="t" style="left:3338.1px;top:814.9px;color:#3a3a3a;transform:scaleX(0.9674)">81.1</span>
<span class="t" style="left:965.8px;top:876.5px;color:#3a3a3a;transform:scaleX(0.8962)">Giugno</span>
<span class="t" style="left:1679.5px;top:876.5px;color:#3a3a3a;transform:scaleX(0.9674)">900.6</span>
<span class="t" style="left:2086.3px;top:876.5px;color:#3a3a3a;transform:scaleX(0.9674)">900.6</span>
<span class="t" style="left:2493.3px;top:876.5px;color:#3a3a3a;transform:scaleX(0.9674)">100.0</span>
<span class="t" style="left:2920.4px;top:876.5px;color:#3a3a3a;transform:scaleX(0.9674)">33.8</span>
<span class="t" style="left:964.9px;top:938.0px;color:#3a3a3a;transform:scaleX(0.9012)">Luglio</span>
<span class="t" style="left:1679.5px;top:938.0px;color:#3a3a3a;transform:scaleX(0.9674)">922.6</span>
<span class="t" style="left:2086.3px;top:938.0px;color:#3a3a3a;transform:scaleX(0.9674)">922.6</span>
<span class="t" style="left:2493.3px;top:938.0px;color:#3a3a3a;transform:scaleX(0.9674)">100.0</span>
<span class="t" style="left:2920.4px;top:938.0px;color:#3a3a3a;transform:scaleX(0.9674)">36.3</span>
<span class="t" style="left:967.6px;top:999.6px;color:#3a3a3a;transform:scaleX(0.9371)">Agosto</span>
<span class="t" style="left:1679.5px;top:999.6px;color:#3a3a3a;transform:scaleX(0.9674)">923.5</span>
<span class="t" style="left:2086.3px;top:999.6px;color:#3a3a3a;transform:scaleX(0.9674)">923.5</span>
<span class="t" style="left:2493.3px;top:999.6px;color:#3a3a3a;transform:scaleX(0.9674)">100.0</span>
<span class="t" style="left:2920.4px;top:999.6px;color:#3a3a3a;transform:scaleX(0.9674)">33.0</span>
<span class="t" style="left:965.7px;top:1061.2px;color:#3a3a3a;transform:scaleX(0.9435)">Settembre</span>
<span class="t" style="left:1679.5px;top:1061.2px;color:#3a3a3a;transform:scaleX(0.9674)">914.2</span>
<span class="t" style="left:2086.3px;top:1061.2px;color:#3a3a3a;transform:scaleX(0.9674)">852.9</span>
<span class="t" style="left:2511.7px;top:1061.2px;color:#3a3a3a;transform:scaleX(0.9674)">93.3</span>
<span class="t" style="left:2920.4px;top:1061.2px;color:#3a3a3a;transform:scaleX(0.9674)">30.4</span>
<span class="t" style="left:3338.1px;top:1061.2px;color:#3a3a3a;transform:scaleX(0.9674)">61.3</span>
<span class="t" style="left:965.6px;top:1122.7px;color:#3a3a3a;transform:scaleX(1.0000)">Ottobre</span>
<span class="t" style="left:1679.5px;top:1122.7px;color:#3a3a3a;transform:scaleX(0.9674)">976.3</span>
<span class="t" style="left:2086.3px;top:1122.7px;color:#3a3a3a;transform:scaleX(0.9674)">567.8</span>
<span class="t" style="left:2511.7px;top:1122.7px;color:#3a3a3a;transform:scaleX(0.9674)">58.2</span>
<span class="t" style="left:2920.4px;top:1122.7px;color:#3a3a3a;transform:scaleX(0.9674)">20.0</span>
<span class="t" style="left:3319.7px;top:1122.7px;color:#3a3a3a;transform:scaleX(0.9674)">408.5</span>
<span class="t" style="left:964.8px;top:1184.3px;color:#3a3a3a;transform:scaleX(0.9320)">Novembre</span>
<span class="t" style="left:1679.5px;top:1184.3px;color:#3a3a3a;transform:scaleX(0.9674)">984.2</span>
<span class="t" style="left:2086.3px;top:1184.3px;color:#3a3a3a;transform:scaleX(0.9674)">255.1</span>
<span class="t" style="left:2511.7px;top:1184.3px;color:#3a3a3a;transform:scaleX(0.9674)">25.9</span>
<span class="t" style="left:2920.4px;top:1184.3px;color:#3a3a3a;transform:scaleX(0.9674)">12.7</span>
<span class="t" style="left:3319.7px;top:1184.3px;color:#3a3a3a;transform:scaleX(0.9674)">729.1</span>
<span class="t" style="left:964.9px;top:1245.9px;color:#3a3a3a;transform:scaleX(0.9057)">Dicembre</span>
<span class="t" style="left:1661.2px;top:1245.9px;color:#3a3a3a;transform:scaleX(0.9674)">1035.8</span>
<span class="t" style="left:2086.3px;top:1245.9px;color:#3a3a3a;transform:scaleX(0.9674)">196.1</span>
<span class="t" style="left:2511.7px;top:1245.9px;color:#3a3a3a;transform:scaleX(0.9674)">18.9</span>
<span class="t" style="left:2920.4px;top:1245.9px;color:#3a3a3a;transform:scaleX(0.9674)">12.3</span>
<span class="t" style="left:3319.7px;top:1245.9px;color:#3a3a3a;transform:scaleX(0.9674)">839.7</span>
<span class="t" style="left:1273.4px;top:1967.8px;color:#3a3a3a;transform:scaleX(1.0105)">Totali</span>
<span class="t" style="left:1624.7px;top:1967.8px;color:#3a3a3a;transform:scaleX(0.9637)">11503.36</span>
<span class="t" style="left:2066.9px;top:1967.8px;color:#3a3a3a;transform:scaleX(0.9674)">7889.5</span>
<span class="t" style="left:2493.2px;top:1967.8px;color:#3a3a3a;transform:scaleX(0.9674)">69.65</span>
<span class="t" style="left:3265.2px;top:1967.8px;color:#3a3a3a;transform:scaleX(0.9529)">3613.86</span>
</div></body></html>
